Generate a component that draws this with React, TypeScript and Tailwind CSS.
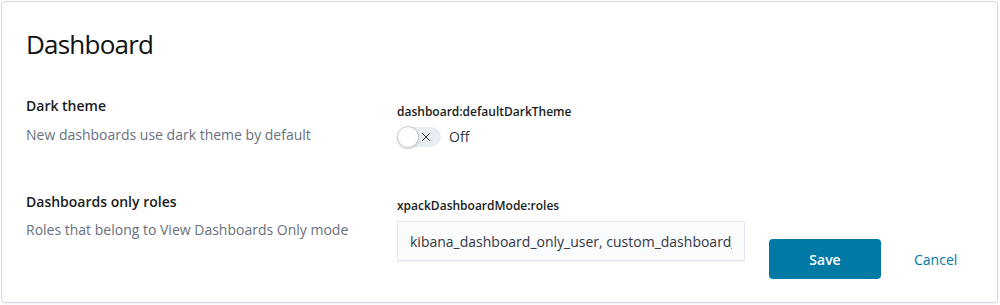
import React from "react";

const font = { fontFamily: '"Open Sans", "Liberation Sans", sans-serif' };

function Toggle() {
  return (
    <div className="flex items-center gap-2">
      <div className="relative h-[20px] w-[44px] rounded-full bg-[#e9edf3]">
        <div className="absolute left-0 top-[-1px] h-[22px] w-[22px] rounded-full border border-[#c5ccd7] bg-white shadow-[0_1px_2px_rgba(0,0,0,0.15)]" />
        <svg
          className="absolute left-[23px] top-[4px] h-[12px] w-[12px] text-[#343741]"
          viewBox="0 0 16 16"
          fill="none"
          stroke="currentColor"
          strokeWidth={1.3}
        >
          <path d="M3 3l10 10M13 3L3 13" />
        </svg>
      </div>
      <span className="text-[14px] text-[#343741]">Off</span>
    </div>
  );
}

export default function App() {
  return (
    <div className="h-[305px] w-[1000px] bg-white p-[1px]" style={font}>
      <div className="h-[302px] w-[997px] rounded-[4px] border border-[#d3dae6] bg-white px-6 pt-[22px] shadow-[0_1px_2px_rgba(0,0,0,0.06)]">
        <h1 className="text-[26px] font-medium leading-[40px] tracking-[-0.03em] text-[#111]">Dashboard</h1>

        <div className="mt-[32px] flex items-start">
          <div className="w-[371px]">
            <h3 className="text-[14px] font-semibold leading-[20px] text-[#1a1c21]">Dark theme</h3>
            <p className="mt-[9px] text-[14px] leading-[20px] text-[#69707d]">New dashboards use dark theme by default</p>
          </div>
          <div className="pt-[7px]">
            <div className="text-[12px] font-semibold leading-[18px] text-[#1a1c21]">dashboard:defaultDarkTheme</div>
            <div className="mt-[5px]">
              <Toggle />
            </div>
          </div>
        </div>

        <div className="mt-[45px] flex items-start">
          <div className="w-[371px]">
            <h3 className="text-[14px] font-semibold leading-[20px] text-[#1a1c21]">Dashboards only roles</h3>
            <p className="mt-[8px] text-[14px] leading-[20px] text-[#69707d]">Roles that belong to View Dashboards Only mode</p>
          </div>
          <div className="pt-[5px]">
            <div className="text-[12px] font-semibold leading-[18px] text-[#1a1c21]">xpackDashboardMode:roles</div>
            <div className="mt-[6px] flex items-start">
              <input
                readOnly
                value="kibana_dashboard_only_user, custom_dashboard_role"
                className="h-[40px] w-[348px] border border-[#e3e8f0] bg-[#fafbfd] px-3 text-[14px] text-[#343741] shadow-[0_1px_1px_rgba(0,0,0,0.05)] outline-none"
                style={font}
              />
              <button className="ml-6 mt-[18px] h-[40px] w-[112px] rounded-[4px] bg-[#0079a5] text-[14px] font-semibold text-white">
                Save
              </button>
              <button className="ml-[33px] mt-[18px] h-[40px] text-[14px] text-[#0079a5]">Cancel</button>
            </div>
          </div>
        </div>
      </div>
    </div>
  );
}
